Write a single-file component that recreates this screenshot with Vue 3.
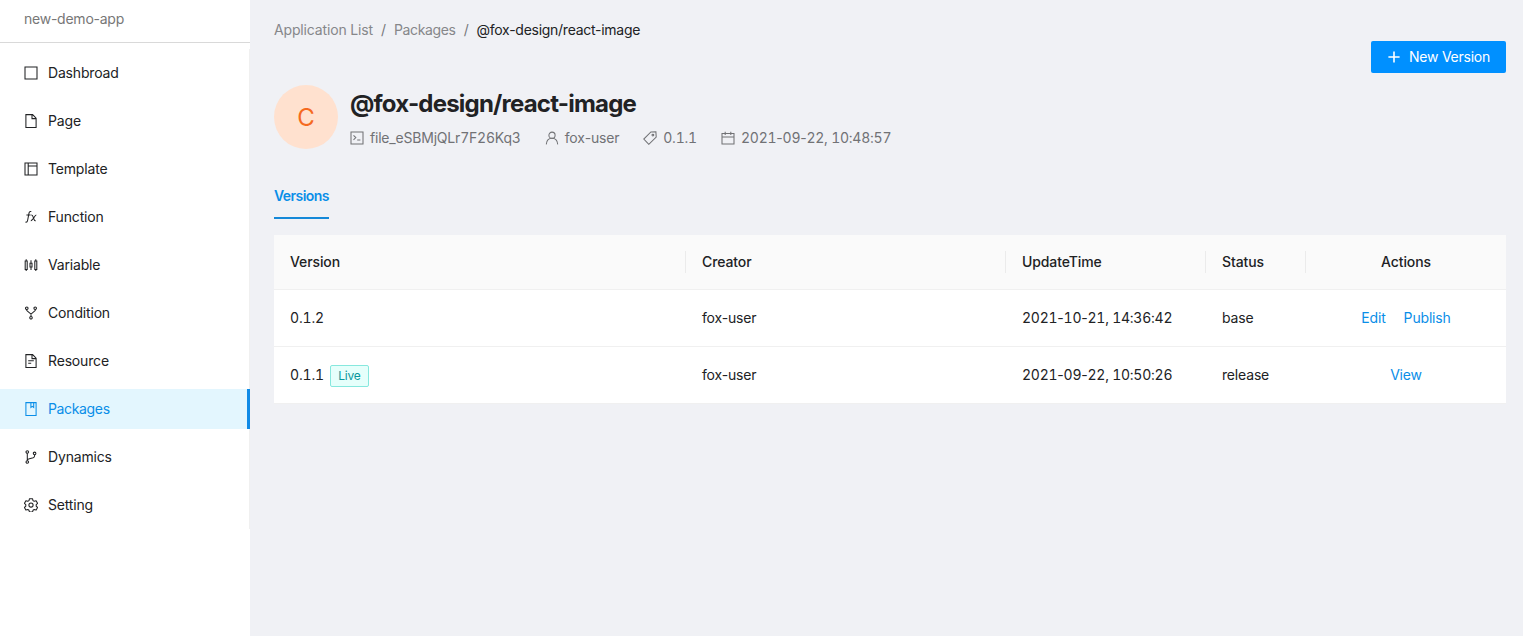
<script setup>
const menu = [
  { label: 'Dashbroad', icon: 'square' },
  { label: 'Page', icon: 'file' },
  { label: 'Template', icon: 'layout' },
  { label: 'Function', icon: 'function' },
  { label: 'Variable', icon: 'sliders' },
  { label: 'Condition', icon: 'fork' },
  { label: 'Resource', icon: 'filetext' },
  { label: 'Packages', icon: 'book', active: true },
  { label: 'Dynamics', icon: 'branches' },
  { label: 'Setting', icon: 'setting' },
]

const meta = [
  { icon: 'code', text: 'file_eSBMjQLr7F26Kq3', kind: 'file' },
  { icon: 'user', text: 'fox-user', kind: 'user' },
  { icon: 'tag', text: '0.1.1', kind: 'version' },
  { icon: 'calendar', text: '2021-09-22, 10:48:57', kind: 'date' },
]

const rows = [
  { version: '0.1.2', creator: 'fox-user', time: '2021-10-21, 14:36:42', status: 'base', actions: ['Edit', 'Publish'] },
  { version: '0.1.1', live: true, creator: 'fox-user', time: '2021-09-22, 10:50:26', status: 'release', actions: ['View'] },
]

// Digits are set in tabular figures, hyphens keep their natural width.
const runs = (text) => text.split(/(-)/)

const icons = {
  square: '<path d="M1 1h12v12H1z"/>',
  file: '<path d="M1.9.6h6.7l3.5 3.5v9.3H1.9zM8 .8v3.8h4"/>',
  layout: '<path d="M1 1h12v12H1zM4.2 1v12M4.2 4h8.6"/>',
  function: '<path d="M7.3 1.6C5.7 1 5.2 2 4.9 3.6L3.7 10c-.3 1.7-.9 2.5-2.2 2M2.4 5h4.2M7.3 5c1.4-.2 1.6.9 2.2 3 .5 1.8.8 3.1 2.2 2.8M12.3 5c-1.7 0-3.2 5.8-5.5 5.8"/>',
  sliders: '<path d="M1.2 3h2v8.4h-2zM6 5.2h2v3.7H6zM10.8 3h2v8.4h-2zM2.2 1.3V3M2.2 11.4V13M7 2.2v3M7 8.9v3M11.8 1.3V3M11.8 11.4V13"/>',
  fork: '<circle cx="2.8" cy="2.2" r="1.3"/><circle cx="11.2" cy="2.2" r="1.3"/><circle cx="7" cy="11.8" r="1.3"/><path d="M2.8 3.5v1.1L7 8.1l4.2-3.5V3.5M7 8.1v2.4"/>',
  filetext: '<path d="M1.9.6h6.7l3.5 3.5v9.3H1.9zM8 .8v3.8h4M4.2 6.7h5.6M4.2 9.2h3"/>',
  book: '<path d="M1.9.6h10.2v12.8H1.9zM6.9.8v4.6l1.4-1 1.4 1V.8"/>',
  branches: '<circle cx="3.3" cy="2" r="1.3"/><circle cx="3.3" cy="12" r="1.3"/><circle cx="10.6" cy="3.4" r="1.3"/><path d="M3.3 3.3v7.4M10.6 4.7v1.1c0 1-.5 1.6-1.4 1.9L4.5 9.1c-.8.2-1.2.7-1.2 1.6"/>',
  setting: '<circle cx="7" cy="7" r="2.1"/><path d="M5.5.7h3l.5 1.9 1.2.7 1.9-.5 1.5 2.6-1.4 1.3v1.5l1.4 1.3-1.5 2.6-1.9-.6-1.2.8-.5 1.8h-3L5 12.3l-1.2-.8-1.9.6L.4 9.5l1.4-1.3V6.7L.4 5.4l1.5-2.6 1.9.5L5 2.6z" stroke-linejoin="round"/>',
  code: '<path d="M1 1h12v12H1zM3.5 4.4l2.3 2.2-2.3 2.2M7.2 9h3.2"/>',
  user: '<circle cx="7" cy="4.2" r="3.1"/><path d="M1.3 13.4c.2-3.6 2.5-6.1 5.7-6.1s5.5 2.5 5.7 6.1"/>',
  tag: '<path d="M7.9 1l5-.1.3 5.1-7.4 7.3L.8 8.1z"/><circle cx="9.9" cy="4.1" r=".9"/>',
  calendar: '<path d="M1 2.5h12v10.4H1zM1 6h12M4.2.7v3.4M9.8.7v3.4"/>',
  plus: '<path d="M7 1.4v11.2M1.4 7h11.2" stroke-width="1.6"/>',
}
</script>

<template>
  <div class="app">
    <aside class="sidebar">
      <div class="app-name"><span>new-demo-app</span></div>
      <nav class="menu">
        <a v-for="item in menu" :key="item.label" class="menu-item" :class="{ active: item.active }">
          <svg class="icon" viewBox="0 0 14 14" v-html="icons[item.icon]" />
          <span>{{ item.label }}</span>
        </a>
      </nav>
    </aside>

    <main class="content">
      <div class="breadcrumb">
        <span class="crumb-app">Application List</span><i>/</i><span class="crumb-pkg">Packages</span><i>/</i><span class="current">@fox-design/react-image</span>
      </div>
      <div class="toolbar">
        <button class="primary">
          <svg class="icon" viewBox="0 0 14 14" v-html="icons.plus" />
          <span>New Version</span>
        </button>
      </div>

      <header class="package">
        <div class="avatar">C</div>
        <div class="info">
          <h1>@fox-design/react-image</h1>
          <div class="meta">
            <span v-for="m in meta" :key="m.kind" class="meta-item" :class="m.kind">
              <svg class="icon" viewBox="0 0 14 14" v-html="icons[m.icon]" />
              <span><span v-for="(t, i) in runs(m.text)" :key="i" :class="{ num: t !== '-' }">{{ t }}</span></span>
            </span>
          </div>
        </div>
      </header>

      <div class="tabs"><div class="tab">Versions</div></div>

      <div class="table">
        <div class="row head">
          <div class="cell">Version</div>
          <div class="cell">Creator</div>
          <div class="cell">UpdateTime</div>
          <div class="cell">Status</div>
          <div class="cell actions">Actions</div>
        </div>
        <div v-for="r in rows" :key="r.version" class="row">
          <div class="cell version"><span class="num">{{ r.version }}</span><span v-if="r.live" class="tag">Live</span></div>
          <div class="cell">{{ r.creator }}</div>
          <div class="cell time"><span><span v-for="(t, i) in runs(r.time)" :key="i" :class="{ num: t !== '-' }">{{ t }}</span></span></div>
          <div class="cell">{{ r.status }}</div>
          <div class="cell actions"><a v-for="a in r.actions" :key="a">{{ a }}</a></div>
        </div>
      </div>
    </main>
  </div>
</template>

<style>
body { margin: 0; background: #f0f1f5; }
</style>

<style scoped>
* { box-sizing: border-box; }
.app {
  display: flex;
  height: 636px;
  overflow: hidden;
  background: #f0f1f5;
  color: #212224;
  font: 14px/22px Inter, "Liberation Sans", sans-serif;
  letter-spacing: -0.17px;
  white-space: nowrap;
}
.num { font-feature-settings: "tnum"; }
.icon {
  width: 14px;
  height: 14px;
  flex: none;
  fill: none;
  stroke: currentColor;
  stroke-width: 1.05;
}
.sidebar { width: 250px; flex: none; background: #fff; }
.app-name {
  height: 43px;
  padding: 8px 24px 0;
  border-bottom: 1px solid #d9d9d9;
  color: #777;
  letter-spacing: -0.24px;
}
.menu {
  display: flex;
  flex-direction: column;
  gap: 8px;
  margin-top: 6px;
  padding: 4px 0;
  height: 480px;
  border-right: 1px solid #f0f0f0;
}
.menu-item {
  display: flex;
  align-items: center;
  gap: 10px;
  height: 40px;
  flex: none;
  padding-left: 24px;
}
.menu-item.active {
  margin-right: -1px;
  background: #e3f6fe;
  color: #0a8ee8;
  border-right: 3px solid #0f8ae6;
  letter-spacing: -0.35px;
}
.content { width: 1256px; padding: 19px 0 0 24px; }
.breadcrumb { display: flex; height: 22px; color: #86878a; letter-spacing: -0.15px; }
.breadcrumb i { margin: 0 8px; font-style: normal; color: #77787b; }
.breadcrumb .crumb-pkg { letter-spacing: -0.35px; }
.breadcrumb .current { color: #212224; letter-spacing: -0.27px; }
.toolbar { display: flex; justify-content: flex-end; height: 32px; }
.primary {
  display: flex;
  align-items: center;
  gap: 8px;
  width: 135px;
  height: 32px;
  padding: 0 0 0 16px;
  border: 0;
  border-radius: 2px;
  background: #0090ff;
  color: #fff;
  font: inherit;
  letter-spacing: -0.24px;
}
.package { display: flex; gap: 12px; margin-top: 12px; }
.avatar {
  width: 64px;
  height: 64px;
  border-radius: 50%;
  background: #ffe1cf;
  color: #f56a20;
  font-size: 24px;
  line-height: 65px;
  text-align: center;
}
h1 { margin: 3px 0 0; font-size: 24px; line-height: 32px; font-weight: 700; letter-spacing: -0.79px; }
.meta { display: flex; gap: 24px; margin-top: 7px; color: #717275; }
.meta-item { display: flex; align-items: center; gap: 6px; letter-spacing: -0.2px; }
.meta-item.date, .time { letter-spacing: -0.24px; }
.tabs { display: flex; height: 46px; margin-top: 24px; }
.tab {
  width: 55px;
  height: 46px;
  padding-top: 12px;
  border-bottom: 2px solid #1488d8;
  color: #0a8ee8;
  font-weight: 600;
  letter-spacing: -0.57px;
}
.table { margin-top: 16px; background: #fff; }
.row { display: grid; grid-template-columns: 412px 320px 200px 100px 200px; height: 57px; border-bottom: 1px solid #f0f0f0; }
.row.head { height: 55px; background: #fafafa; font-weight: 500; letter-spacing: -0.1px; }
.cell { position: relative; display: flex; align-items: center; padding: 0 16px; }
.head .cell:not(:last-child)::after {
  content: "";
  position: absolute;
  right: 0;
  top: 16px;
  width: 1px;
  height: 22px;
  background: #ebebeb;
}
.actions { justify-content: center; gap: 18px; }
.actions a { color: #0a8ee8; }
.tag {
  width: 39px;
  height: 22px;
  margin: 2px 0 0 6px;
  border: 1px solid #87e8de;
  border-radius: 2px;
  background: #e6fffb;
  color: #08979c;
  font-size: 12px;
  line-height: 20px;
  text-align: center;
}
</style>
